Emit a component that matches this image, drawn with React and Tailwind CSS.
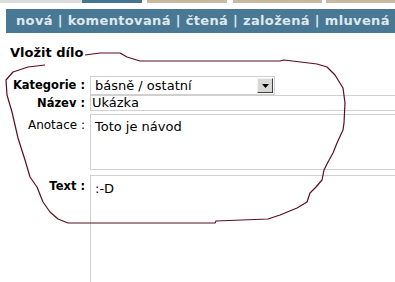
import React from "react";

const Row = ({ label, bold = true, children, className = "" }) => (
  <div className={`flex ${className}`}>
    <div
      className={`w-[90px] shrink-0 pr-[5px] text-right text-black ${
        bold ? "text-[11.5px] font-bold" : "text-[12px] font-normal"
      }`}
    >
      {label}
    </div>
    <div className="flex-1">{children}</div>
  </div>
);

const Scribble = () => (
  <svg
    className="pointer-events-none absolute left-0 top-0"
    width="395"
    height="282"
    viewBox="0 0 395 282"
  >
    <path
      d="M85 55 L100 53 L120 53 L127 57 L140 61 L200 61 L280 61 L284 60 L317 64 L327 67 L335 75 L343 88 L345 103 L344 123 L343 130 L337 143 L333 153 L328 162 L324 170 L322 180 L316 187 L310 193 L307 202 L297 208 L280 215 L268 219 L216 221 L215 223 L68 223 L58 219 L50 212 L43 202 L37 187 L30 177 L25 160 L18 138 L12 112 L7 95 L6 80 L13 72 L28 67 L45 65"
      fill="none"
      stroke="#5a0d1e"
      strokeWidth="1.2"
      strokeLinejoin="round"
    />
  </svg>
);

export default function App() {
  return (
    <div className="relative h-[282px] w-[395px] overflow-hidden bg-white font-['DejaVu_Sans',sans-serif]">
      <div className="flex h-[3px]">
        <div className="w-[82px] bg-[#dcdcdc]" />
        <div className="w-[60px] bg-[#46758f]" />
        <div className="ml-[5px] w-[80px] bg-[#c8b9a1]" />
        <div className="ml-[6px] w-[89px] bg-[#c8b9a1]" />
        <div className="ml-[4px] flex-1 bg-[#c8b9a1]" />
      </div>

      <div className="ml-[6px] mt-[6px] h-[24px] whitespace-nowrap bg-[#497894] pl-[10px] text-[13px] font-bold leading-[24px] tracking-[0.35px] text-[#dfe8ee]">
        nová | komentovaná | čtená | založená | mluvená
      </div>

      <div className="ml-[10px] mt-[12px] text-[13px] font-semibold leading-[16px] text-black">
        Vložit dílo
      </div>

      <div className="mt-[15px] flex flex-col">
        <Row label="Kategorie :" className="leading-[19px]">
          <div className="flex h-[19px] w-[185px] items-center justify-between border border-[#d0d0d0] pl-[4px] pr-[1px] text-[13px] text-black">
            <span>básně / ostatní</span>
            <span className="flex h-[15px] w-[16px] items-center justify-center border border-t-[#f4f4f4] border-l-[#f4f4f4] border-r-[#404040] border-b-[#404040] bg-[#d8d8d4]">
              <svg width="7" height="4" viewBox="0 0 7 4">
                <path d="M0 0 H7 L3.5 4 Z" fill="#000" />
              </svg>
            </span>
          </div>
        </Row>

        <Row label="Název :" className="leading-[16px]">
          <div className="h-[16px] border border-r-0 border-[#d0d0d0] pl-[1px] text-[13px] leading-[14px] text-black">
            Ukázka
          </div>
        </Row>

        <Row label="Anotace :" bold={false} className="mt-[3px] leading-[22px]">
          <div className="h-[56px] border border-r-0 border-[#d0d0d0] pl-[4px] pt-[4px] text-[13px] leading-[16px] text-black">
            Toto je návod
          </div>
        </Row>

        <Row label="Text :" className="mt-[5px] leading-[22px]">
          <div className="h-[120px] border border-r-0 border-b-0 border-[#d0d0d0] pl-[4px] pt-[5px] text-[13px] leading-[16px] text-black">
            :-D
          </div>
        </Row>
      </div>

      <Scribble />
    </div>
  );
}
